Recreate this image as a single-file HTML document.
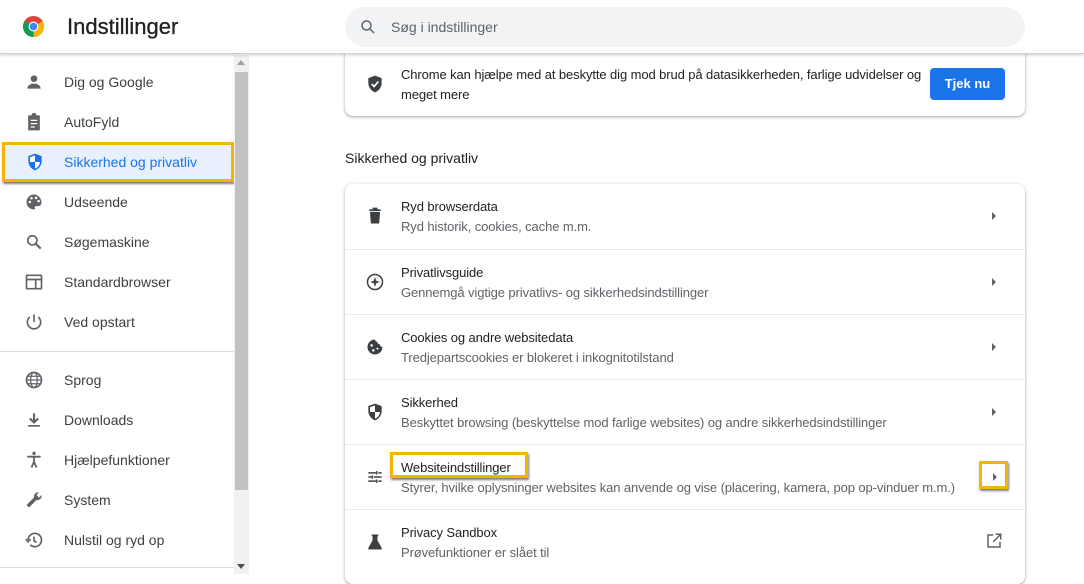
<!DOCTYPE html>
<html><head><meta charset="utf-8"><style>
*{margin:0;padding:0;box-sizing:border-box}
body{width:1084px;height:574px;overflow:hidden;background:#fff;font-family:"Liberation Sans",Arial,sans-serif;position:relative;color:#202124}
.hdr{position:absolute;left:0;top:0;width:1084px;height:54px;background:#fff;border-bottom:1px solid #d0d0d0;box-shadow:0 1px 3px rgba(0,0,0,.2);z-index:2}
.title{position:absolute;left:67px;top:14px;font-size:22px;color:#202124;-webkit-text-stroke:.3px #202124}
.search{position:absolute;left:345px;top:7px;width:680px;height:40px;background:#f1f3f4;border-radius:20px}
.search span{position:absolute;left:46px;top:12px;font-size:14px;color:#5f6368}
.side{position:absolute;left:0;top:55px;width:234px;height:519px;background:#fff}
.it{position:absolute;left:0;height:40px;width:234px;font-size:14px;color:#3c4043}
.it svg{position:absolute;left:24px;top:10px}
.it span{position:absolute;left:64px;top:12px}
.sb{position:absolute;left:234px;top:55px;width:15px;height:519px;background:#f1f1f1}
.thumb{position:absolute;left:235px;top:72px;width:13px;height:418px;background:#c1c1c1}
.card{position:absolute;left:345px;width:680px;background:#fff;border-radius:8px;box-shadow:0 1px 2px rgba(60,64,67,.3),0 1px 3px 1px rgba(60,64,67,.15)}
.row{position:absolute;left:0;width:680px;height:65px;border-top:1px solid #e8eaed}
.row .t{position:absolute;left:56px;top:15px;font-size:13px;color:#202124;letter-spacing:-.1px}
.row .s{position:absolute;left:56px;top:35px;font-size:13px;color:#5f6368;letter-spacing:-.1px}
.row svg{position:absolute;left:20px;top:22px}
.arr{position:absolute;left:647px;top:28px;width:0;height:0;border-top:4px solid transparent;border-bottom:4px solid transparent;border-left:4px solid #5f6368}
</style></head><body>
<div class="hdr">
<svg style="position:absolute;left:22px;top:15px" width="23" height="23" viewBox="0 0 24 24"><circle cx="12" cy="12" r="11" fill="#db4437"/><path d="M12 12 L21.5 6.5 A11 11 0 0 1 13 23 L12 23 Z" fill="#f4b400"/><path d="M12 12 L12 23 A11 11 0 0 1 2.5 6.5Z" fill="#0f9d58"/><circle cx="12" cy="12" r="5.2" fill="#fff"/><circle cx="12" cy="12" r="4" fill="#4285f4"/></svg>
<div class="title">Indstillinger</div>
<div class="search"><svg style="position:absolute;left:14px;top:11px" width="18" height="18" viewBox="0 0 24 24"><circle cx="10" cy="10" r="6" stroke="#5f6368" stroke-width="2" fill="none"/><path d="M14.5 14.5 L20 20" stroke="#5f6368" stroke-width="2"/></svg><span>Søg i indstillinger</span></div>
</div>
<div class="side">
<div class="it" style="top:7px"><svg width="20" height="20" viewBox="0 0 24 24"><circle cx="12" cy="8" r="4" fill="#5f6368"/><path d="M4 20c0-4 4-6 8-6s8 2 8 6z" fill="#5f6368"/></svg><span>Dig og Google</span></div>
<div class="it" style="top:47px"><svg width="20" height="20" viewBox="0 0 24 24"><path d="M5 4h4a3 3 0 0 1 6 0h4v18H5z" fill="#5f6368"/><path d="M8 10h8M8 14h8M8 18h5" stroke="#fff" stroke-width="1.5"/></svg><span>AutoFyld</span></div>
<div class="it" style="top:87px;background:#e8f0fe;color:#1a73e8;border:3px solid #f4b400;box-shadow:1px 2px 2px rgba(0,0,0,.5);left:2px;width:232px"><svg style="left:20px;top:7px" width="20" height="20" viewBox="0 0 24 24"><path d="M12 2 4 5v6c0 5 3.5 9.5 8 11 4.5-1.5 8-6 8-11V5z" fill="#1a73e8"/><path d="M12 4v8H6V6.3zM12 12h6c-.5 4-3 7-6 8z" fill="#fff"/></svg><span style="left:59px;top:9px">Sikkerhed og privatliv</span></div>
<div class="it" style="top:127px"><svg width="20" height="20" viewBox="0 0 24 24"><path d="M12 3a9 9 0 0 0 0 18c1 0 1.5-.8 1-1.7-.6-1 0-2.3 1.3-2.3H17a4 4 0 0 0 4-4c0-5.5-4-10-9-10z" fill="#5f6368"/><circle cx="7" cy="12" r="1.5" fill="#fff"/><circle cx="9" cy="7.5" r="1.5" fill="#fff"/><circle cx="14.5" cy="7" r="1.5" fill="#fff"/><circle cx="17.5" cy="11" r="1.5" fill="#fff"/></svg><span>Udseende</span></div>
<div class="it" style="top:167px"><svg width="20" height="20" viewBox="0 0 24 24"><circle cx="10" cy="10" r="5.5" stroke="#5f6368" stroke-width="2" fill="none"/><path d="M14 14l6 6" stroke="#5f6368" stroke-width="2.5"/></svg><span>Søgemaskine</span></div>
<div class="it" style="top:207px"><svg width="20" height="20" viewBox="0 0 24 24"><rect x="3" y="4" width="18" height="16" rx="1" stroke="#5f6368" stroke-width="2" fill="none"/><path d="M3 9h18M14 9v11" stroke="#5f6368" stroke-width="2"/></svg><span>Standardbrowser</span></div>
<div class="it" style="top:247px"><svg width="20" height="20" viewBox="0 0 24 24"><path d="M12 3v9" stroke="#5f6368" stroke-width="2"/><path d="M7 6a8 8 0 1 0 10 0" stroke="#5f6368" stroke-width="2" fill="none"/></svg><span>Ved opstart</span></div>
<div style="position:absolute;left:0;top:296px;width:234px;height:1px;background:#dadce0"></div>
<div class="it" style="top:305px"><svg width="20" height="20" viewBox="0 0 24 24"><circle cx="12" cy="12" r="9" stroke="#5f6368" stroke-width="2" fill="none"/><ellipse cx="12" cy="12" rx="4" ry="9" stroke="#5f6368" stroke-width="1.5" fill="none"/><path d="M3 12h18M4.5 7.5h15M4.5 16.5h15" stroke="#5f6368" stroke-width="1.5"/></svg><span>Sprog</span></div>
<div class="it" style="top:345px"><svg width="20" height="20" viewBox="0 0 24 24"><path d="M12 4v10M7 10l5 5 5-5" stroke="#5f6368" stroke-width="2.5" fill="none"/><path d="M5 19h14" stroke="#5f6368" stroke-width="2"/></svg><span>Downloads</span></div>
<div class="it" style="top:385px"><svg width="20" height="20" viewBox="0 0 24 24"><circle cx="12" cy="4" r="2" fill="#5f6368"/><path d="M4 8h16M12 8v6M9 21l3-7 3 7" stroke="#5f6368" stroke-width="2.2" fill="none"/></svg><span>Hjælpefunktioner</span></div>
<div class="it" style="top:425px"><svg width="20" height="20" viewBox="0 0 24 24"><path d="M21 6l-3 3-3-3 3-3a5 5 0 0 0-6 6L3 18l3 3 9-9a5 5 0 0 0 6-6z" fill="#5f6368"/></svg><span>System</span></div>
<div class="it" style="top:465px"><svg width="20" height="20" viewBox="0 0 24 24"><path d="M5 12a8 8 0 1 1 2.5 5.8" stroke="#5f6368" stroke-width="2" fill="none"/><path d="M2 11l3 3 3-3" stroke="#5f6368" stroke-width="2" fill="none"/><path d="M12 8v5l3 2" stroke="#5f6368" stroke-width="2" fill="none"/></svg><span>Nulstil og ryd op</span></div>
<div style="position:absolute;left:0;top:512px;width:234px;height:1px;background:#dadce0"></div>
</div>
<div class="sb"></div><div class="thumb"></div>
<div style="position:absolute;left:237px;top:60px;border-left:4px solid transparent;border-right:4px solid transparent;border-bottom:5px solid #a0a0a0"></div>
<div style="position:absolute;left:237px;top:564px;border-left:4px solid transparent;border-right:4px solid transparent;border-top:5px solid #505050"></div>

<div class="card" style="top:40px;height:76px">
<svg style="position:absolute;left:20px;top:34px" width="20" height="20" viewBox="0 0 24 24"><path d="M12 2 4 5v6c0 5 3.5 9.5 8 11 4.5-1.5 8-6 8-11V5z" fill="#3c4043"/><path d="M8 12l3 3 5-6" stroke="#fff" stroke-width="2" fill="none"/></svg>
<div style="position:absolute;left:56px;top:25px;font-size:13px;line-height:20px;width:535px;letter-spacing:-.1px">Chrome kan hjælpe med at beskytte dig mod brud på datasikkerheden, farlige udvidelser og meget mere</div>
<div style="position:absolute;left:585px;top:28px;width:75px;height:32px;background:#1a73e8;border-radius:4px;color:#fff;font-size:13px;font-weight:bold;text-align:center;line-height:32px">Tjek nu</div>
</div>
<div style="position:absolute;left:345px;top:150px;font-size:14px;color:#202124">Sikkerhed og privatliv</div>
<div class="card" style="top:184px;height:400px">
<div class="row" style="top:0;border-top:none"><svg width="20" height="20" viewBox="0 0 24 24"><path d="M6 7h12l-1 14H7z" fill="#3c4043"/><path d="M5 5h14M9 3h6" stroke="#3c4043" stroke-width="2"/></svg><div class="t">Ryd browserdata</div><div class="s">Ryd historik, cookies, cache m.m.</div><div class="arr"></div></div>
<div class="row" style="top:65px"><svg width="20" height="20" viewBox="0 0 24 24"><circle cx="12" cy="12" r="9" stroke="#3c4043" stroke-width="1.8" fill="none"/><path d="M12 6l1.5 4.5L18 12l-4.5 1.5L12 18l-1.5-4.5L6 12l4.5-1.5z" fill="#3c4043"/></svg><div class="t">Privatlivsguide</div><div class="s">Gennemgå vigtige privatlivs- og sikkerhedsindstillinger</div><div class="arr"></div></div>
<div class="row" style="top:130px"><svg width="20" height="20" viewBox="0 0 24 24"><path d="M12 3a9 9 0 1 0 9 9 3 3 0 0 1-3-3 3 3 0 0 1-3-3 3 3 0 0 1-3-3z" fill="#3c4043"/><circle cx="8" cy="10" r="1.5" fill="#fff"/><circle cx="10" cy="16" r="1.5" fill="#fff"/><circle cx="15" cy="14" r="1.2" fill="#fff"/></svg><div class="t">Cookies og andre websitedata</div><div class="s">Tredjepartscookies er blokeret i inkognitotilstand</div><div class="arr"></div></div>
<div class="row" style="top:195px"><svg width="20" height="20" viewBox="0 0 24 24"><path d="M12 2 4 5v6c0 5 3.5 9.5 8 11 4.5-1.5 8-6 8-11V5z" fill="#3c4043"/><path d="M12 4v8H6V6.3zM12 12h6c-.5 4-3 7-6 8z" fill="#fff"/></svg><div class="t">Sikkerhed</div><div class="s">Beskyttet browsing (beskyttelse mod farlige websites) og andre sikkerhedsindstillinger</div><div class="arr"></div></div>
<div class="row" style="top:260px"><svg width="20" height="20" viewBox="0 0 24 24"><path d="M4 7h9M16 7h4M4 12h4M11 12h9M4 17h9M16 17h4M14 5v4M9 10v4M14 15v4" stroke="#3c4043" stroke-width="1.8"/></svg><div style="position:absolute;left:45px;top:7px;width:138px;height:26px;border:3px solid #f4b400;box-shadow:1px 2px 2px rgba(0,0,0,.5)"></div><div class="t">Websiteindstillinger</div><div class="s">Styrer, hvilke oplysninger websites kan anvende og vise (placering, kamera, pop op-vinduer m.m.)</div><div style="position:absolute;left:634px;top:16px;width:29px;height:28px;border:3px solid #f4b400;box-shadow:1px 2px 2px rgba(0,0,0,.5)"></div><div class="arr" style="top:28px;left:648px"></div></div>
<div class="row" style="top:325px"><svg width="20" height="20" viewBox="0 0 24 24"><path d="M8 3h8v2h-1v5l5 9v2H4v-2l5-9V5H8z" fill="#3c4043"/></svg><div class="t">Privacy Sandbox</div><div class="s">Prøvefunktioner er slået til</div><svg style="left:640px;top:22px" width="18" height="18" viewBox="0 0 24 24"><path d="M11 4H4v16h16v-7" stroke="#5f6368" stroke-width="2" fill="none"/><path d="M14 3h7v7M21 3l-10 10" stroke="#5f6368" stroke-width="2" fill="none"/></svg></div>
</div>
</body></html>
